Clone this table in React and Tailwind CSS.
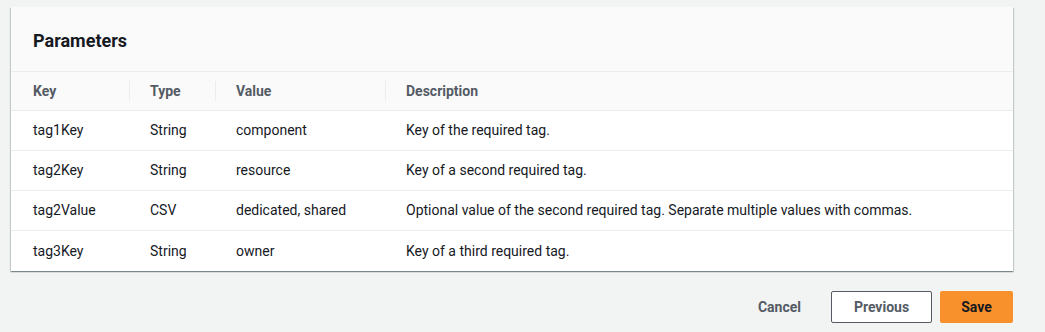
import React from "react";

const rows = [
  { key: "tag1Key", type: "String", value: "component", desc: "Key of the required tag." },
  { key: "tag2Key", type: "String", value: "resource", desc: "Key of a second required tag." },
  { key: "tag2Value", type: "CSV", value: "dedicated, shared", desc: "Optional value of the second required tag. Separate multiple values with commas." },
  { key: "tag3Key", type: "String", value: "owner", desc: "Key of a third required tag." },
];

const cols = "grid grid-cols-[118px_86px_170px_1fr]";

export default function App() {
  return (
    <div
      className="w-[1045px] h-[332px] bg-[#f2f3f3] pl-[11px] pr-[32px] pt-[7px]"
      style={{ fontFamily: "Roboto, 'Liberation Sans', sans-serif" }}
    >
      {/* 파라미터 카드 */}
      <section className="bg-white shadow-[0_1px_1px_0_rgba(0,28,36,0.3),1px_1px_1px_0_rgba(0,28,36,0.15),-1px_1px_1px_0_rgba(0,28,36,0.15)]">
        <div className="h-[65px] bg-[#fafafa] border-b border-[#eaeded] flex items-center px-[22px] pt-[2px]">
          <h2 className="text-[18px] font-bold text-[#16191f]">Parameters</h2>
        </div>

        <div className={`${cols} h-[39px] bg-[#fafafa] border-b border-[#eaeded] items-center text-[14px] font-bold text-[#545b64]`}>
          <div className="pl-[22px]">Key</div>
          <div className="pl-[20px] border-l border-[#eaeded] h-[20px] flex items-center">Type</div>
          <div className="pl-[20px] border-l border-[#eaeded] h-[20px] flex items-center">Value</div>
          <div className="pl-[20px] border-l border-[#eaeded] h-[20px] flex items-center">Description</div>
        </div>

        {rows.map((r, i) => (
          <div
            key={r.key}
            className={`${cols} h-[40px] items-center text-[14px] text-[#16191f] ${i < rows.length - 1 ? "border-b border-[#eaeded]" : ""}`}
          >
            <div className="pl-[22px]">{r.key}</div>
            <div className="pl-[21px]">{r.type}</div>
            <div className="pl-[21px]">{r.value}</div>
            <div className="pl-[21px]">{r.desc}</div>
          </div>
        ))}
      </section>

      {/* 하단 버튼 */}
      <div className="flex justify-end items-center mt-[20px] text-[14px] font-bold">
        <button className="h-[32px] px-[22px] text-[#545b64]">Cancel</button>
        <button className="ml-[8px] h-[32px] w-[101px] border border-[#545b64] rounded-[2px] bg-white text-[#545b64]">
          Previous
        </button>
        <button className="ml-[8px] h-[32px] w-[73px] rounded-[2px] bg-[#f8902b] text-[#16191f]">
          Save
        </button>
      </div>
    </div>
  );
}
